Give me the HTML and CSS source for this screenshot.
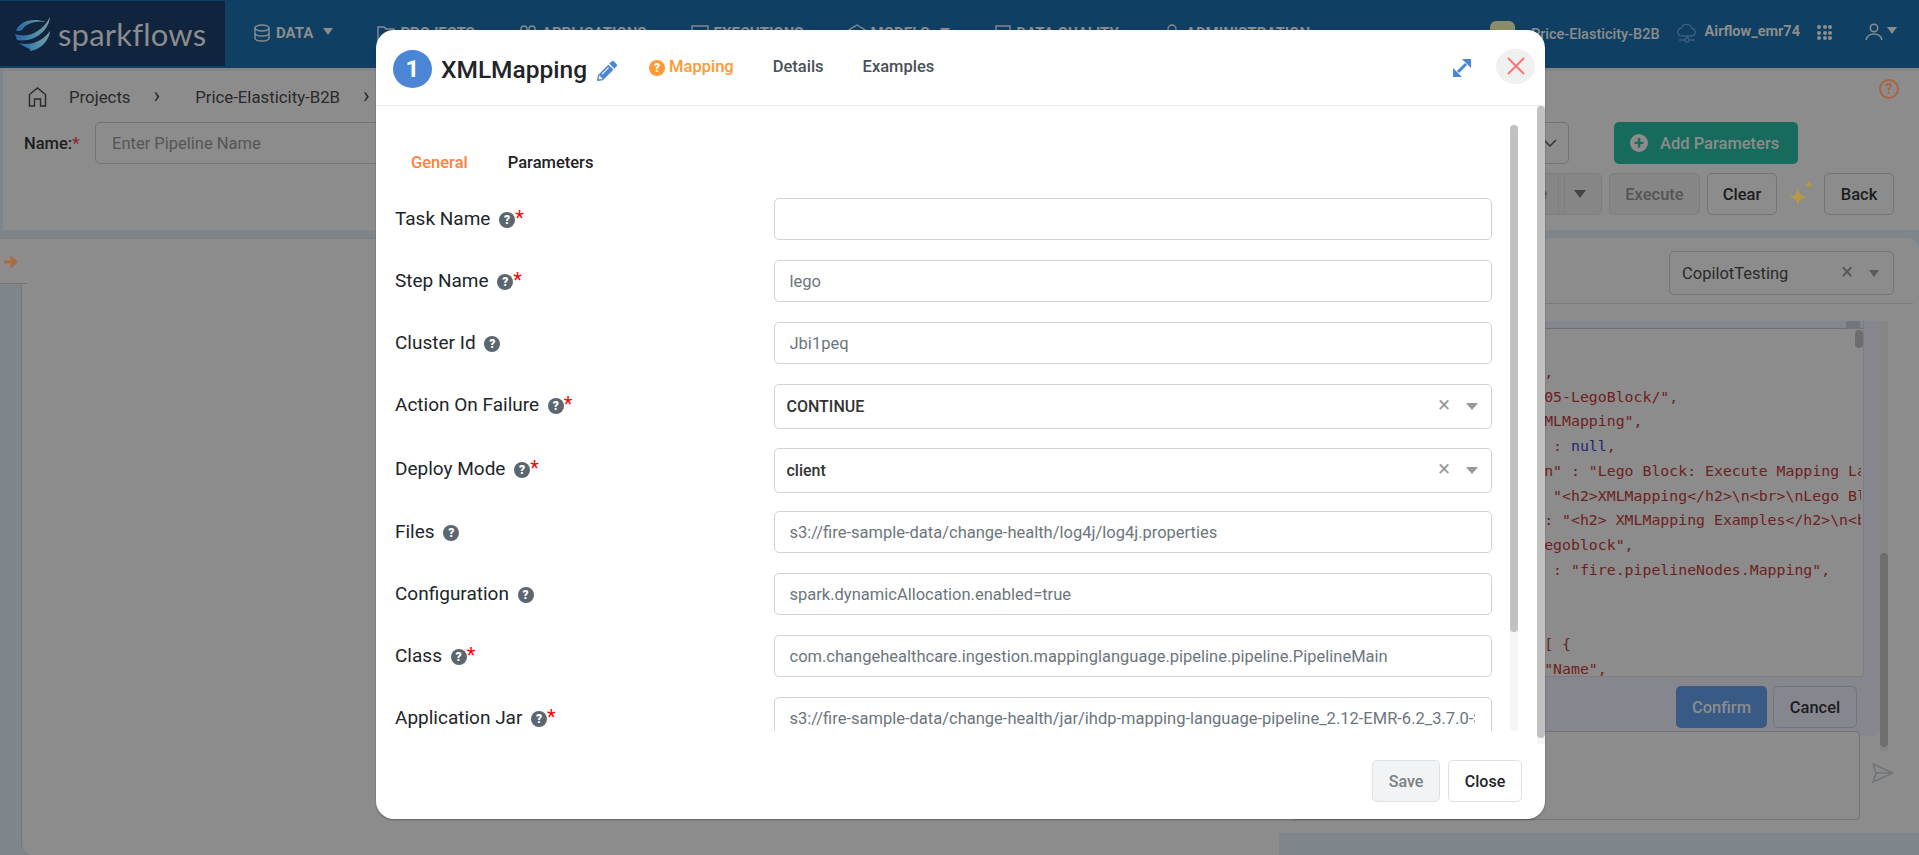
FILE: index.html
```html
<!DOCTYPE html>
<html lang="en">
<head>
  <meta charset="UTF-8" />
  <title>Sparkflows - Pipeline</title>
  <link rel="stylesheet" href="styles.css">
</head>
<body>
  <header class="navbar">
    <div class="logo">
      <svg width="36" height="36" viewBox="0 0 36 36">
        <defs>
          <linearGradient id="swirl" x1="0" y1="0" x2="1" y2="0">
            <stop offset="0" stop-color="#2a62a8" />
            <stop offset="0.6" stop-color="#4f8fa6" />
            <stop offset="1" stop-color="#7d9aa0" />
          </linearGradient>
        </defs>
        <path fill="url(#swirl)" d="M1 15C4 6 16 1 31 6C20 4 10 8 7 14C5 15 3 15 1 15Z" />
        <path fill="url(#swirl)" d="M0 18C11 22 26 18 35 1C34 14 20 27 2 24Z" />
        <path fill="url(#swirl)" d="M4 27C14 30 27 26 35 15C34 26 23 35 14 35C19 33 10 32 4 27Z" />
      </svg>
      <span class="logo-text">sparkflows</span>
    </div>
    <nav class="nav-links">
      <a class="nav-link">
        <svg class="nav-icon" viewBox="0 0 18 18"><ellipse cx="9" cy="4" rx="7" ry="3" /><path d="M2 4v10c0 1.7 3 3 7 3s7-1.300 7-3V4M2 9c0 1.700 3 3 7 3s7-1.300 7-3" /></svg>
        DATA <i class="caret"></i>
      </a>
      <a class="nav-link">
        <svg class="nav-icon" viewBox="0 0 18 18"><path d="M1 16V3h6l2 2h8v11z" /></svg>
        PROJECTS
      </a>
      <a class="nav-link">
        <svg class="nav-icon" viewBox="0 0 18 18"><circle cx="5" cy="5" r="3" /><circle cx="13" cy="5" r="3" /><path d="M1 16c0-4 2-6 8-6s8 2 8 6" /></svg>
        APPLICATIONS
      </a>
      <a class="nav-link">
        <svg class="nav-icon" viewBox="0 0 18 18"><rect x="1" y="2" width="16" height="14" /><path d="M5 8l3 2-3 2" /></svg>
        EXECUTIONS
      </a>
      <a class="nav-link">
        <svg class="nav-icon" viewBox="0 0 18 18"><path d="M9 1l8 5v7l-8 4-8-4V6z" /></svg>
        MODELS <i class="caret"></i>
      </a>
      <a class="nav-link">
        <svg class="nav-icon" viewBox="0 0 18 18"><rect x="2" y="2" width="14" height="14" /></svg>
        DATA QUALITY
      </a>
      <a class="nav-link">
        <svg class="nav-icon" viewBox="0 0 18 18"><circle cx="9" cy="5" r="4" /><path d="M2 17c0-5 3-7 7-7s7 2 7 7" /></svg>
        ADMINISTRATION
      </a>
    </nav>
    <div class="nav-right">
      <span class="project-avatar"></span>
      <span class="project-name">Price-Elasticity-B2B</span>
      <svg class="cloud-icon" width="20" height="20" viewBox="0 0 20 20"><path d="M5 13a4 4 0 0 1-.5-8A5.500 5.500 0 0 1 15 5.500a3.800 3.800 0 0 1 0 7.500zM10 13v3M2 17h5M13 17h5" /><circle cx="10" cy="17" r="2" /></svg>
      <span class="cluster-name">Airflow_emr74</span>
      <span class="apps-grid"><i></i><i></i><i></i><i></i><i></i><i></i><i></i><i></i><i></i></span>
      <svg class="user-icon" width="18" height="18" viewBox="0 0 18 18"><circle cx="9" cy="5" r="3.700" /><path d="M1 17c1-4 4-6 8-6s7 2 8 6" /></svg>
      <i class="caret"></i>
    </div>
  </header>

  <section class="toolbar">
    <div class="crumb-row">
      <svg class="home-icon" width="19" height="20" viewBox="0 0 19 20"><path d="M1.500 19V7.500L9.500 1l8 6.500V19h-5v-7h-6v7z" /></svg>
      <span class="crumb">Projects</span>
      <span class="crumb-sep">&#8250;</span>
      <span class="crumb">Price-Elasticity-B2B</span>
      <span class="crumb-sep">&#8250;</span>
      <span class="page-help">?</span>
    </div>
    <div class="name-row">
      <label class="name-label">Name:<em>*</em></label>
      <input class="name-input" placeholder="Enter Pipeline Name" />
      <div class="param-select">
        <svg width="14" height="9" viewBox="0 0 14 9"><path d="M1 1l6 6 6-6" /></svg>
      </div>
      <button class="btn-add"><span class="plus">+</span>Add Parameters</button>
    </div>
    <div class="action-row">
      <div class="split-btn"><span class="split-main">Save</span><span class="split-arrow"><i class="caret"></i></span></div>
      <button class="btn btn-muted">Execute</button>
      <button class="btn btn-small">Clear</button>
      <svg class="sparkle" width="26" height="28" viewBox="0 0 26 28"><path d="M10 8c1 6 3 8 9 9-6 1-8 3-9 9-1-6-3-8-9-9 6-1 8-3 9-9z" /><path d="M21 0c.5 3 1.500 4 4 4.500-2.500.5-3.500 1.500-4 4.500-.5-3-1.500-4-4-4.500 2.500-.5 3.500-1.500 4-4.500z" /></svg>
      <button class="btn btn-small">Back</button>
    </div>
  </section>

  <main class="workspace">
    <div class="canvas">
      <div class="canvas-head">
        <div class="arrow-tab">
          <svg width="15" height="14" viewBox="0 0 15 14"><path d="M1 7h11M7.500 2l5 5-5 5" /></svg>
        </div>
      </div>
      <div class="canvas-main"></div>
    </div>

    <aside class="copilot">
      <div class="copilot-head">
        <div class="model-select">
          <span>CopilotTesting</span>
          <span class="select-x">&#215;</span>
          <i class="caret"></i>
        </div>
      </div>
      <div class="chat">
        <div class="chat-main">
          <div class="editor">
            <div class="editor-bar"><span class="editor-fold"></span></div>
<pre class="code">{
  "id" : 1000,
  "dirs" : "/05-LegoBlock/",
  "name" : "XMLMapping",
  "iconImage" : <b>null</b>,
  "description" : "Lego Block: Execute Mapping Language Pipeline",
  "details" : "&lt;h2&gt;XMLMapping&lt;/h2&gt;\n&lt;br&gt;\nLego Block: Execute",
  "examples" : "&lt;h2&gt; XMLMapping Examples&lt;/h2&gt;\n&lt;br&gt;",
  "type" : "legoblock",
  "nodeClass" : "fire.pipelineNodes.Mapping",
  "in" : 1,
  "out" : 1,
  "fields" : [ {
    "name" : "Name",
</pre>
            <span class="editor-thumb"></span>
          </div>
          <div class="confirm-row">
            <button class="btn-confirm">Confirm</button>
            <button class="btn btn-cancel">Cancel</button>
          </div>
        </div>
        <div class="chat-track"><span class="chat-thumb"></span></div>
      </div>
      <div class="composer">
        <div class="composer-box"></div>
        <svg class="send-icon" width="22" height="20" viewBox="0 0 22 20"><path d="M1 1l20 9-20 9 3-9zM4 10h17" /></svg>
      </div>
    </aside>
  </main>

  <div class="modal">
    <div class="modal-header">
      <span class="step-badge">1</span>
      <h2 class="modal-title">XMLMapping</h2>
      <svg class="edit-icon" width="20" height="20" viewBox="0 0 512 512"><path d="M497.900 142.100l-46.100 46.100c-4.700 4.700-12.300 4.700-17 0l-111-111c-4.700-4.700-4.700-12.300 0-17l46.100-46.100c18.700-18.700 49.100-18.700 67.900 0l60.100 60.100c18.800 18.700 18.800 49.100 0 67.900zM284.200 99.800L21.600 362.400.4 483.900c-2.900 16.400 11.400 30.600 27.800 27.800l121.500-21.300 262.600-262.600c4.700-4.700 4.700-12.300 0-17l-111-111c-4.800-4.700-12.400-4.700-17.100 0zM124.100 339.900c-5.500-5.500-5.500-14.300 0-19.800l154-154c5.500-5.500 14.300-5.500 19.800 0s5.500 14.300 0 19.800l-154 154c-5.500 5.500-14.300 5.500-19.800 0zM88 424h48v36.300l-64.500 11.300-31.100-31.100L51.700 376H88v48z" /></svg>
      <div class="modal-tabs">
        <a class="modal-tab active"><span class="help help-orange">?</span>Mapping</a>
        <a class="modal-tab">Details</a>
        <a class="modal-tab">Examples</a>
      </div>
      <svg class="expand-icon" width="18" height="18" viewBox="0 0 18 18"><path class="expand-line" d="M5 13l8-8" /><path d="M18 0v9l-9-9zM0 18V9l9 9z" /></svg>
      <button class="modal-close">
        <svg width="18" height="18" viewBox="0 0 18 18"><path d="M1 1l16 16M17 1L1 17" /></svg>
      </button>
    </div>

    <div class="modal-body">
      <div class="form-scroll">
        <div class="form-tabs">
          <a class="form-tab active">General</a>
          <a class="form-tab">Parameters</a>
        </div>

        <div class="form-row">
          <label class="form-label">Task Name <span class="help">?</span><em>*</em></label>
          <input class="form-input" />
        </div>
        <div class="form-row">
          <label class="form-label">Step Name <span class="help">?</span><em>*</em></label>
          <input class="form-input" value="lego" />
        </div>
        <div class="form-row">
          <label class="form-label">Cluster Id <span class="help">?</span></label>
          <input class="form-input" value="Jbi1peq" />
        </div>
        <div class="form-row select-row">
          <label class="form-label">Action On Failure <span class="help">?</span><em>*</em></label>
          <div class="form-select"><span class="select-value">CONTINUE</span><span class="select-x">&#215;</span><i class="caret"></i></div>
        </div>
        <div class="form-row select-row">
          <label class="form-label">Deploy Mode <span class="help">?</span><em>*</em></label>
          <div class="form-select"><span class="select-value">client</span><span class="select-x">&#215;</span><i class="caret"></i></div>
        </div>
        <div class="form-row">
          <label class="form-label">Files <span class="help">?</span></label>
          <input class="form-input" value="s3://fire-sample-data/change-health/log4j/log4j.properties" />
        </div>
        <div class="form-row">
          <label class="form-label">Configuration <span class="help">?</span></label>
          <input class="form-input" value="spark.dynamicAllocation.enabled=true" />
        </div>
        <div class="form-row">
          <label class="form-label">Class <span class="help">?</span><em>*</em></label>
          <input class="form-input" value="com.changehealthcare.ingestion.mappinglanguage.pipeline.pipeline.PipelineMain" />
        </div>
        <div class="form-row">
          <label class="form-label">Application Jar <span class="help">?</span><em>*</em></label>
          <input class="form-input" value="s3://fire-sample-data/change-health/jar/ihdp-mapping-language-pipeline_2.12-EMR-6.2_3.7.0-SNAPSHOT.jar" />
        </div>
      </div>
      <div class="inner-track"><span class="inner-thumb"></span></div>
      <div class="outer-track"><span class="outer-thumb"></span></div>
    </div>

    <div class="modal-footer">
      <button class="btn-save">Save</button>
      <button class="btn-close">Close</button>
    </div>
  </div>
</body>
</html>
```

FILE: styles.css
```css
* {
  box-sizing: border-box;
}
html, body {
  height: 855px;
}
body {
  margin: 0;
  overflow: hidden;
  position: relative;
  font-family: Roboto, sans-serif;
  background: #7f868b;
  color: #1f2124;
}
button, input {
  font-family: inherit;
}
em {
  font-style: normal;
  color: #f00;
}
.caret {
  display: inline-block;
  border-left: 5px solid transparent;
  border-right: 5px solid transparent;
  border-top: 7px solid #8c8c8c;
}

/* navbar, everything behind the modal is painted dimmed */
.navbar {
  display: flex;
  height: 68px;
  background: #0f4063;
  color: #8c8c8c;
  padding-right: 22px;
}
.logo {
  width: 225px;
  height: 65px;
  margin-top: 1px;
  background: #10243e;
  display: flex;
  align-items: center;
  padding-left: 15px;
  gap: 7px;
  color: #8c8c8c;
}
.logo-text {
  font-family: Lato, sans-serif;
  font-size: 31px;
  letter-spacing: 0.2px;
}
.nav-links {
  display: flex;
  gap: 44px;
  padding: 23px 0 0 28px;
}
.nav-link {
  display: flex;
  gap: 5px;
  height: 20px;
  align-items: center;
  font-size: 15px;
  font-weight: 700;
  white-space: nowrap;
}
.nav-link .caret {
  margin: -4px 0 0 5px;
}
.nav-icon {
  width: 18px;
  height: 18px;
  fill: none;
  stroke: #8c8c8c;
  stroke-width: 1.4;
}
.nav-right {
  margin-left: auto;
  display: flex;
  align-items: flex-start;
}
.project-avatar {
  width: 25px;
  height: 25px;
  margin: 21px 16px 0 0;
  border-radius: 6px;
  background: #8c8c68;
}
.project-name {
  margin: 26px 17px 0 0;
  font-size: 14.500px;
  font-weight: 500;
}
.cloud-icon {
  margin: 23px 8px 0 0;
  fill: none;
  stroke: #3e5f80;
  stroke-width: 1.3;
}
.cluster-name {
  margin: 23px 17px 0 0;
  font-size: 14.500px;
  font-weight: 700;
}
.apps-grid {
  display: grid;
  grid-template-columns: repeat(3, 4px);
  gap: 1.500px;
  margin: 25px 33px 0 0;
}
.apps-grid i {
  width: 4px;
  height: 4px;
  border-radius: 50%;
  background: #8c8c8c;
}
.user-icon {
  margin: 23px 4px 0 0;
  fill: none;
  stroke: #8c8c8c;
  stroke-width: 1.500;
}
.nav-right .caret {
  margin-top: 27px;
}

/* pipeline toolbar */
.toolbar {
  height: 162px;
  margin-left: 3px;
  background: #8c8c8c;
  border-top: 3px solid #858585;
  padding: 0 25px 0 21px;
}
.crumb-row {
  display: flex;
  align-items: center;
  height: 48px;
  padding-top: 3px;
  font-size: 16.800px;
  color: #2a2a2a;
}
.home-icon {
  margin: 0 22px 0 4px;
  fill: none;
  stroke: #2a2a2a;
  stroke-width: 1.400;
}
.crumb-sep {
  margin: -3px 35px 0 23px;
  font-size: 22px;
}
.page-help {
  margin: -16px -5px 0 auto;
  width: 20px;
  height: 20px;
  border: 2px solid #a8653f;
  border-radius: 50%;
  color: #a8653f;
  font-size: 14px;
  font-weight: 700;
  line-height: 16px;
  text-align: center;
}
.name-row {
  display: flex;
  margin-top: 3px;
  height: 42px;
  align-items: stretch;
  padding-right: 96px;
}
.name-label {
  width: 71px;
  font-size: 16.500px;
  font-weight: 500;
  line-height: 44px;
  color: #1d1d1d;
}
.name-label em {
  color: #8f2630;
}
.name-input {
  width: 905px;
  padding: 0 16px;
  background: transparent;
  border: 1px solid #727579;
  border-radius: 5px;
  font-size: 16.500px;
  outline: none;
}
.name-input::placeholder {
  color: #555;
}
.param-select {
  flex: 1;
  margin-left: 10px;
  border: 1px solid #727579;
  border-radius: 5px;
  display: flex;
  align-items: center;
  justify-content: flex-end;
  padding-right: 11px;
}
.param-select svg {
  fill: none;
  stroke: #333;
  stroke-width: 1.500;
}
.btn-add {
  width: 184px;
  margin-left: 45px;
  background: #176b5c;
  border: 0;
  border-radius: 5px;
  color: #8c8c8c;
  font-size: 16.500px;
  font-weight: 500;
  display: flex;
  align-items: center;
  padding: 0 0 0 16px;
}
.plus {
  width: 18px;
  height: 18px;
  margin-right: 12px;
  border-radius: 50%;
  background: #8c8c8c;
  color: #176b5c;
  font-size: 18px;
  font-weight: 700;
  line-height: 17px;
}
.action-row {
  display: flex;
  justify-content: flex-end;
  align-items: center;
  gap: 7px;
  height: 42px;
  margin-top: 9px;
}
.btn {
  height: 42px;
  padding: 0 16px;
  background: transparent;
  border: 1px solid #727579;
  border-radius: 5px;
  color: #1d1d1d;
  font-size: 16.500px;
  font-weight: 500;
}
.btn-small {
  width: 70px;
  padding: 0;
}
.btn-muted {
  width: 91px;
  padding: 0;
  background: #868686;
  border-color: #7c7e82;
  color: #555;
}
.split-btn {
  display: flex;
  height: 42px;
  border: 1px solid #7c7e82;
  border-radius: 5px;
  background: #868686;
  color: #555;
  font-size: 16.500px;
  font-weight: 500;
  line-height: 40px;
}
.split-main {
  padding: 0 11px 0 16px;
  border-right: 1px solid #7c7e82;
}
.split-arrow {
  width: 37px;
  padding-left: 9px;
  margin-left: 5px;
  border-left: 1px solid #7c7e82;
}
.split-arrow .caret {
  border-top-color: #444;
  border-left-width: 6px;
  border-right-width: 6px;
  border-top-width: 8px;
  vertical-align: 1px;
}
.sparkle {
  fill: #b89a45;
  margin: 0 3px 0 4px;
}

/* lower area */
.workspace {
  display: flex;
  height: 625px;
  padding-top: 8px;
}
.canvas {
  flex: 1;
  display: flex;
  flex-direction: column;
}
.canvas-head {
  height: 46px;
  background: #8c8c8c;
  border-top: 1px solid #7c7e80;
}
.arrow-tab {
  width: 27px;
  height: 45px;
  padding: 16px 0 0 3px;
  border-bottom: 1px solid #757575;
}
.arrow-tab svg {
  display: block;
  fill: none;
  stroke: #ad6a3c;
  stroke-width: 3;
}
.canvas-main {
  flex: 1;
  margin-left: 21px;
  background: #8c8c8c;
  border-left: 1px solid #777;
  border-bottom-left-radius: 10px;
}
.copilot {
  width: 640px;
  height: 595px;
  padding: 13px 6px 0 11px;
  background: #8c8c8c;
  border-radius: 0 12px 0 0;
}
.copilot-head {
  height: 53px;
  padding-left: 379px;
  border-bottom: 1px solid #7b7b7b;
}
.model-select {
  width: 225px;
  height: 44px;
  padding: 0 14px 0 12px;
  display: flex;
  align-items: center;
  border: 1px solid #727579;
  border-radius: 5px;
  color: #2a2a2a;
  font-size: 16.500px;
}
.model-select .select-x {
  margin: -3px 0 0 auto;
  color: #555;
}
.model-select .caret {
  margin-left: 16px;
  border-top-color: #5a5a5a;
}
.chat {
  display: flex;
  margin-top: 17px;
  height: 430px;
}
.chat-main {
  width: 590px;
  height: 415px;
  background: #85868e;
  border-radius: 0 0 10px 10px;
}
.editor {
  position: relative;
  width: 574px;
  height: 356px;
  padding-top: 0;
  background: #8c8c8c;
  border: 1px solid #7b7c84;
  border-top: 0;
  border-radius: 0 0 4px 4px;
  overflow: hidden;
}
.editor-bar {
  height: 8px;
  background: #85868e;
  border-bottom: 1px solid #6e6f76;
  display: flex;
  justify-content: flex-end;
}
.editor-fold {
  width: 14px;
  height: 8px;
  margin-right: 3px;
  background: #75767d;
}
.code {
  margin: 0;
  padding: 6px 0 0 137px;
  height: 347px;
  width: 570px;
  overflow: hidden;
  font-family: "DejaVu Sans Mono", monospace;
  font-size: 14.850px;
  line-height: 24.750px;
  color: #6e1f1f;
}
.code b {
  font-weight: 400;
  color: #25256e;
}
.editor-thumb {
  position: absolute;
  top: 9px;
  right: 0;
  width: 8px;
  height: 18px;
  border-radius: 4px;
  background: #6d6d6d;
}
.confirm-row {
  display: flex;
  justify-content: flex-end;
  gap: 6px;
  padding: 9px 23px 0 0;
}
.btn-confirm {
  width: 91px;
  height: 42px;
  background: #385a85;
  border: 0;
  border-radius: 5px;
  color: #8c8c8c;
  font-size: 16.500px;
  font-weight: 500;
}
.btn-cancel {
  width: 84px;
  padding: 0;
}
.chat-track {
  width: 8px;
  background: #868686;
}
.chat-thumb {
  display: block;
  height: 194px;
  margin-top: 232px;
  border-radius: 4px;
  background: #6f6f6f;
}
.composer {
  display: flex;
  margin: -20px 0 0 2px;
  align-items: center;
}
.composer-box {
  width: 568px;
  height: 89px;
  border: 1px solid #737478;
  border-radius: 4px;
  background: #8c8c8c;
}
.send-icon {
  margin: -6px 0 0 12px;
  fill: none;
  stroke: #6f7478;
  stroke-width: 1.400;
}

/* modal */
.modal {
  position: absolute;
  top: 30px;
  left: 376px;
  width: 1169px;
  height: 789px;
  display: flex;
  flex-direction: column;
  background: #fff;
  border-radius: 18px;
  box-shadow: 0 1px 2px rgba(0, 0, 0, 0.3);
}
.modal-header {
  display: flex;
  align-items: center;
  height: 76px;
  padding: 3px 10px 0 17px;
  border-bottom: 1px solid #e9ecef;
  flex-shrink: 0;
}
.step-badge {
  width: 39px;
  height: 38px;
  border-radius: 50%;
  background: #4a85d6;
  color: #fff;
  font-size: 24px;
  font-weight: 700;
  line-height: 38px;
  text-align: center;
}
.modal-title {
  margin: 0 0 0 9px;
  font-size: 24.500px;
  font-weight: 500;
  color: #212529;
}
.edit-icon {
  margin: 3px 0 0 10px;
  fill: #4a85d6;
}
.modal-tabs {
  display: flex;
  gap: 39px;
  margin: -5px 0 0 32px;
}
.modal-tab {
  font-size: 16.500px;
  font-weight: 500;
  color: #495057;
}
.modal-tab.active {
  color: #ff9933;
}
.expand-icon {
  margin: -3px 25px 0 auto;
  fill: #4a85d6;
}
.expand-line {
  fill: none;
  stroke: #4a85d6;
  stroke-width: 3;
}
.modal-close {
  width: 39px;
  height: 35px;
  margin-top: -6px;
  padding: 0;
  border: 0;
  border-radius: 50%;
  background: #f0f0f0;
  display: flex;
  align-items: center;
  justify-content: center;
}
.modal-close svg {
  fill: none;
  stroke: #ff7070;
  stroke-width: 1.800;
}
.modal-body {
  display: flex;
  flex-shrink: 0;
  height: 638px;
}
.form-scroll {
  width: 1116px;
  height: 625px;
  padding-left: 19px;
  overflow: hidden;
}
.form-tabs {
  display: flex;
  gap: 40px;
  height: 69px;
  padding: 45px 0 0 16px;
  margin-bottom: 23px;
  font-size: 16.500px;
  font-weight: 500;
  line-height: 24px;
}
.form-tab.active {
  color: #ff7f3f;
}
.form-row {
  display: grid;
  grid-template-columns: 378.500px 718.500px;
  align-items: center;
  margin-bottom: 20px;
}
.select-row {
  margin-bottom: 18.500px;
}
.select-row .form-label {
  margin-bottom: 5px;
}
.form-label {
  margin-bottom: 2px;
  font-size: 19px;
  color: #212529;
  white-space: nowrap;
}
.form-label em {
  font-size: 20px;
}
.help {
  display: inline-block;
  width: 16px;
  height: 16px;
  margin-left: 4px;
  border-radius: 50%;
  background: #5b6670;
  color: #fff;
  font-size: 12px;
  font-weight: 900;
  line-height: 16px;
  text-align: center;
  vertical-align: 1px;
}
.help-orange {
  margin: 0 4px 0 0;
  background: #ff9933;
  vertical-align: 0;
}
.form-input {
  height: 42px;
  width: 100%;
  padding: 0 16px 0 15px;
  border: 1px solid #ced4da;
  border-radius: 5px;
  color: #6c757d;
  font-size: 16.500px;
  outline: none;
}
.form-select {
  display: flex;
  align-items: center;
  height: 45px;
  padding: 0 13px 0 12px;
  border: 1px solid #ced4da;
  border-radius: 5px;
}
.select-value {
  font-size: 16px;
  font-weight: 500;
  color: #333;
}
.select-x {
  margin: -3px 0 0 auto;
  font-size: 22px;
  line-height: 1;
  color: #999;
}
.form-select .caret {
  margin-left: 16px;
  border-left-width: 6px;
  border-right-width: 6px;
  border-top-color: #999;
}
.inner-track {
  width: 8px;
  height: 606px;
  margin: 19px 0 0 18px;
  background: #f5f5f5;
  border-radius: 4px;
}
.inner-thumb {
  display: block;
  height: 507px;
  border-radius: 4px;
  background: #c1c1c1;
}
.outer-track {
  width: 8px;
  margin-left: 19px;
  background: #f5f5f5;
}
.outer-thumb {
  display: block;
  height: 632px;
  border-radius: 4px;
  background: #c1c1c1;
}
.modal-footer {
  display: flex;
  justify-content: flex-end;
  gap: 8px;
  padding: 16px 23px 0 0;
}
.btn-save, .btn-close {
  height: 42px;
  border: 1px solid #dee2e6;
  border-radius: 5px;
  font-size: 16px;
  font-weight: 500;
}
.btn-save {
  width: 68px;
  background: #f1f3f5;
  color: #7a7f85;
}
.btn-close {
  width: 74px;
  background: #fff;
  color: #212529;
}
```
